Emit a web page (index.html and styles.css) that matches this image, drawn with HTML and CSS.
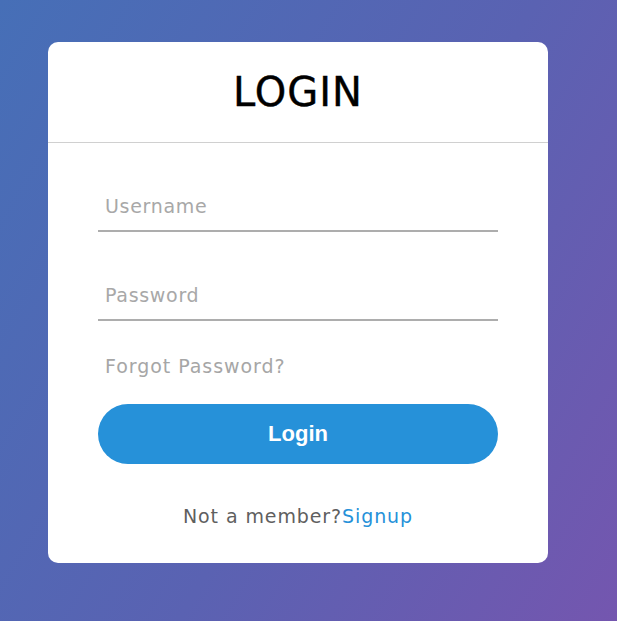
FILE: index.html
```html
<!DOCTYPE html>
<html>
<head>
<meta charset="utf-8">
<link rel="stylesheet" href="styles.css">
</head>
<body>
<div class="card">
  <h1 class="title">LOGIN</h1>
  <form class="form">
    <div class="field"><span class="placeholder">Username</span></div>
    <div class="field"><span class="placeholder">Password</span></div>
    <div class="forgot">Forgot Password?</div>
    <button type="button" class="btn">Login</button>
    <div class="signup">Not a member?<a class="link">Signup</a></div>
  </form>
</div>
</body>
</html>
```
FILE: styles.css
```css
html, body {
  margin: 0;
  padding: 0;
}
body {
  width: 617px;
  height: 621px;
  box-sizing: border-box;
  padding: 42px 0 0 48px;
  background: linear-gradient(120deg, #466fb7 0%, #5a62b2 55%, #7456af 100%);
  font-family: "DejaVu Sans", sans-serif;
  overflow: hidden;
}
.card {
  width: 500px;
  height: 521px;
  background: #fff;
  border-radius: 10px;
  display: flex;
  flex-direction: column;
}
.title {
  margin: 0;
  height: 100px;
  border-bottom: 1px solid #d0d0d0;
  display: flex;
  align-items: center;
  justify-content: center;
  font-size: 40px;
  font-weight: normal;
  color: #000;
  letter-spacing: 1px;
  -webkit-text-stroke: 0.4px #000;
}
.form {
  padding: 47px 50px 0;
  display: flex;
  flex-direction: column;
}
.field {
  border-bottom: 2px solid #adadad;
  display: flex;
  align-items: center;
  padding: 0 7px 8px;
  box-sizing: border-box;
  margin-bottom: 47px;
  height: 42px;
}
.field + .field {
  margin-bottom: 0;
}
.placeholder {
  font-size: 19px;
  letter-spacing: 0.7px;
  color: #a8a8a8;
}
.forgot {
  margin-top: 34px;
  padding-left: 7px;
  font-size: 19px;
  letter-spacing: 0.95px;
  color: #a6a6a6;
  height: 22px;
  line-height: 22px;
}
.btn {
  margin-top: 27px;
  height: 60px;
  width: 400px;
  border: none;
  border-radius: 30px;
  background: #2691d9;
  color: #fff;
  font-family: "Liberation Sans", Arial, sans-serif;
  font-weight: bold;
  font-size: 22px;
  cursor: pointer;
}
.signup {
  margin-top: 41px;
  text-align: center;
  font-size: 19px;
  letter-spacing: 0.9px;
  color: #5f5f5f;
  line-height: 22px;
}
.link {
  color: #2691d9;
}
```
